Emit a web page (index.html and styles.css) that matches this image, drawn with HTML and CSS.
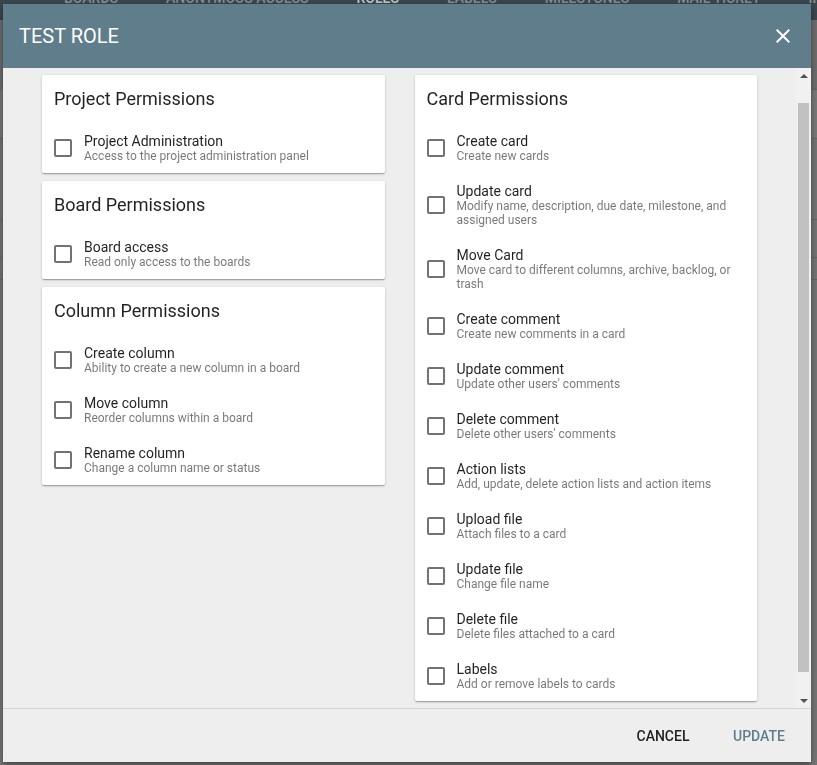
FILE: index.html
```html
<!DOCTYPE html>
<html lang="en">
<head>
<meta charset="utf-8">
<title>Test Role</title>
<link rel="stylesheet" href="styles.css">
</head>
<body>
<div class="app">
  <nav class="topnav">
    <span class="tab">BOARDS</span>
    <span class="tab">ANONYMOUS ACCESS</span>
    <span class="tab tab-active">ROLES</span>
    <span class="tab">LABELS</span>
    <span class="tab">MILESTONES</span>
    <span class="tab">MAIL TICKET</span>
    <span class="tab">IMPORT</span>
  </nav>
  <div class="bg-row bg-row-1"></div>
  <div class="bg-row bg-row-2"></div>
  <div class="bg-row bg-row-3"></div>
  <div class="bg-row bg-row-4"></div>
  <div class="bg-row bg-row-5"></div>
</div>

<div class="dialog" role="dialog">
  <header class="dialog-header">
    <h1 class="dialog-title">TEST ROLE</h1>
    <button class="close-btn" aria-label="Close">
      <svg width="24" height="24" viewBox="0 0 24 24"><path d="M19 6.41 17.59 5 12 10.59 6.41 5 5 6.41 10.59 12 5 17.59 6.41 19 12 13.41 17.59 19 19 17.59 13.41 12z" fill="#fff"/></svg>
    </button>
  </header>

  <div class="dialog-main">
    <div class="dialog-body">
      <div class="grid">
        <div class="col">
          <section class="card">
            <h2 class="card-title">Project Permissions</h2>
            <label class="perm"><span class="box"></span><span class="perm-text"><span class="perm-label">Project Administration</span><span class="perm-desc">Access to the project administration panel</span></span></label>
          </section>
          <section class="card">
            <h2 class="card-title">Board Permissions</h2>
            <label class="perm"><span class="box"></span><span class="perm-text"><span class="perm-label">Board access</span><span class="perm-desc">Read only access to the boards</span></span></label>
          </section>
          <section class="card">
            <h2 class="card-title">Column Permissions</h2>
            <label class="perm"><span class="box"></span><span class="perm-text"><span class="perm-label">Create column</span><span class="perm-desc">Ability to create a new column in a board</span></span></label>
            <label class="perm"><span class="box"></span><span class="perm-text"><span class="perm-label">Move column</span><span class="perm-desc">Reorder columns within a board</span></span></label>
            <label class="perm"><span class="box"></span><span class="perm-text"><span class="perm-label">Rename column</span><span class="perm-desc">Change a column name or status</span></span></label>
          </section>
        </div>
        <div class="col">
          <section class="card">
            <h2 class="card-title">Card Permissions</h2>
            <label class="perm"><span class="box"></span><span class="perm-text"><span class="perm-label">Create card</span><span class="perm-desc">Create new cards</span></span></label>
            <label class="perm"><span class="box"></span><span class="perm-text"><span class="perm-label">Update card</span><span class="perm-desc">Modify name, description, due date, milestone, and assigned users</span></span></label>
            <label class="perm"><span class="box"></span><span class="perm-text"><span class="perm-label">Move Card</span><span class="perm-desc">Move card to different columns, archive, backlog, or trash</span></span></label>
            <label class="perm"><span class="box"></span><span class="perm-text"><span class="perm-label">Create comment</span><span class="perm-desc">Create new comments in a card</span></span></label>
            <label class="perm"><span class="box"></span><span class="perm-text"><span class="perm-label">Update comment</span><span class="perm-desc">Update other users' comments</span></span></label>
            <label class="perm"><span class="box"></span><span class="perm-text"><span class="perm-label">Delete comment</span><span class="perm-desc">Delete other users' comments</span></span></label>
            <label class="perm"><span class="box"></span><span class="perm-text"><span class="perm-label">Action lists</span><span class="perm-desc">Add, update, delete action lists and action items</span></span></label>
            <label class="perm"><span class="box"></span><span class="perm-text"><span class="perm-label">Upload file</span><span class="perm-desc">Attach files to a card</span></span></label>
            <label class="perm"><span class="box"></span><span class="perm-text"><span class="perm-label">Update file</span><span class="perm-desc">Change file name</span></span></label>
            <label class="perm"><span class="box"></span><span class="perm-text"><span class="perm-label">Delete file</span><span class="perm-desc">Delete files attached to a card</span></span></label>
            <label class="perm"><span class="box"></span><span class="perm-text"><span class="perm-label">Labels</span><span class="perm-desc">Add or remove labels to cards</span></span></label>
          </section>
        </div>
      </div>
    </div>
    <div class="scrollbar" aria-hidden="true">
      <span class="sb-btn"><span class="sb-arrow-up"></span></span>
      <span class="sb-track"><span class="sb-thumb"></span></span>
      <span class="sb-btn"><span class="sb-arrow-down"></span></span>
    </div>
  </div>

  <footer class="dialog-footer">
    <button class="btn btn-cancel">CANCEL</button>
    <button class="btn btn-primary">UPDATE</button>
  </footer>
</div>
</body>
</html>
```
FILE: styles.css
```css
* { box-sizing: border-box; }

html, body {
  margin: 0;
  height: 100%;
}

body {
  font-family: Roboto, "Noto Sans", "Liberation Sans", sans-serif;
  background: #767676;
  overflow: hidden;
}

/* dimmed application behind the dialog */
.app {
  height: 100%;
}

.topnav {
  height: 20px;
  background: #3b484f;
  display: flex;
  align-items: flex-start;
  padding-left: 40px;
  overflow: hidden;
  white-space: nowrap;
}

.tab {
  font-size: 14px;
  font-weight: 500;
  line-height: 14px;
  margin-top: -9px;
  padding: 0 24px;
  color: #87949b;
}

.tab-active {
  color: #c9d0d3;
}

.bg-row {
  border-bottom: 1px solid #666;
}
.bg-row-1 { height: 70px; background: #6e6e6e; }
.bg-row-2 { height: 49px; background: #7a7a7a; }
.bg-row-3 { height: 81px; }
.bg-row-4 { height: 38px; }
.bg-row-5 { height: 22px; }

/* dialog */
.dialog {
  position: fixed;
  left: 3px;
  top: 4px;
  width: 808px;
  height: 758px;
  display: flex;
  flex-direction: column;
  background: #eeeeee;
  box-shadow: 0 3px 5px rgba(0, 0, 0, 0.3), 0 1px 12px rgba(0, 0, 0, 0.2);
}

.dialog-header {
  flex: none;
  height: 64px;
  background: #607d8b;
  display: flex;
  align-items: center;
  justify-content: space-between;
  padding: 0 16px;
}

.dialog-title {
  margin: 0;
  font-size: 20px;
  font-weight: 400;
  color: #ffffff;
}

.close-btn {
  border: 0;
  background: none;
  padding: 0;
  width: 24px;
  height: 24px;
  display: flex;
  cursor: pointer;
}

.dialog-main {
  flex: 1;
  min-height: 0;
  display: flex;
}

.dialog-body {
  flex: 1;
  min-width: 0;
  overflow: hidden;
  padding: 7px 39px 7px;
}

/* drawn scrollbar */
.scrollbar {
  flex: none;
  width: 15px;
  display: flex;
  flex-direction: column;
  background: #f1f1f1;
}

.sb-btn {
  flex: none;
  height: 15px;
  display: flex;
  align-items: center;
  justify-content: center;
}

.sb-arrow-up,
.sb-arrow-down {
  width: 0;
  height: 0;
  border-left: 4px solid transparent;
  border-right: 4px solid transparent;
}

.sb-arrow-up {
  border-bottom: 4px solid #505050;
}

.sb-arrow-down {
  border-top: 4px solid #505050;
}

.sb-track {
  flex: 1;
  display: flex;
  flex-direction: column;
  padding: 20px 2px 0;
}

.sb-thumb {
  height: 569px;
  background: #c1c1c1;
}

.grid {
  display: grid;
  grid-template-columns: 1fr 1fr;
  column-gap: 30px;
  align-items: start;
}

.col {
  display: flex;
  flex-direction: column;
  gap: 8px;
}

.card {
  background: #ffffff;
  border-radius: 2px;
  padding: 0 12px;
  box-shadow: 0 1px 3px rgba(0, 0, 0, 0.2), 0 1px 1px rgba(0, 0, 0, 0.14), 0 2px 1px -1px rgba(0, 0, 0, 0.12);
}

.card-title {
  margin: 0;
  padding: 12px 0;
  font-size: 18px;
  line-height: 24px;
  font-weight: 400;
  color: rgba(0, 0, 0, 0.87);
}

.perm {
  display: flex;
  align-items: center;
  padding: 10px 0;
  cursor: pointer;
}

.box {
  flex: none;
  width: 18px;
  height: 18px;
  border: 2px solid #727272;
  border-radius: 2px;
  margin-right: 12px;
}

.perm-text {
  display: flex;
  flex-direction: column;
  min-width: 0;
}

.perm-label {
  font-size: 14px;
  line-height: 16px;
  color: rgba(0, 0, 0, 0.87);
}

.perm-desc {
  font-size: 12px;
  line-height: 14px;
  color: rgba(0, 0, 0, 0.54);
}

.dialog-footer {
  flex: none;
  height: 54px;
  border-top: 1px solid #d4d4d4;
  display: flex;
  align-items: center;
  justify-content: flex-end;
  gap: 8px;
  padding-right: 8px;
}

.btn {
  min-width: 88px;
  height: 36px;
  padding: 0 16px;
  border: 0;
  border-radius: 2px;
  background: transparent;
  font-family: Roboto, "Noto Sans", sans-serif;
  font-size: 14px;
  font-weight: 500;
  cursor: pointer;
}

.btn-cancel {
  color: rgba(0, 0, 0, 0.87);
}

.btn-primary {
  color: #607d8b;
}
```
